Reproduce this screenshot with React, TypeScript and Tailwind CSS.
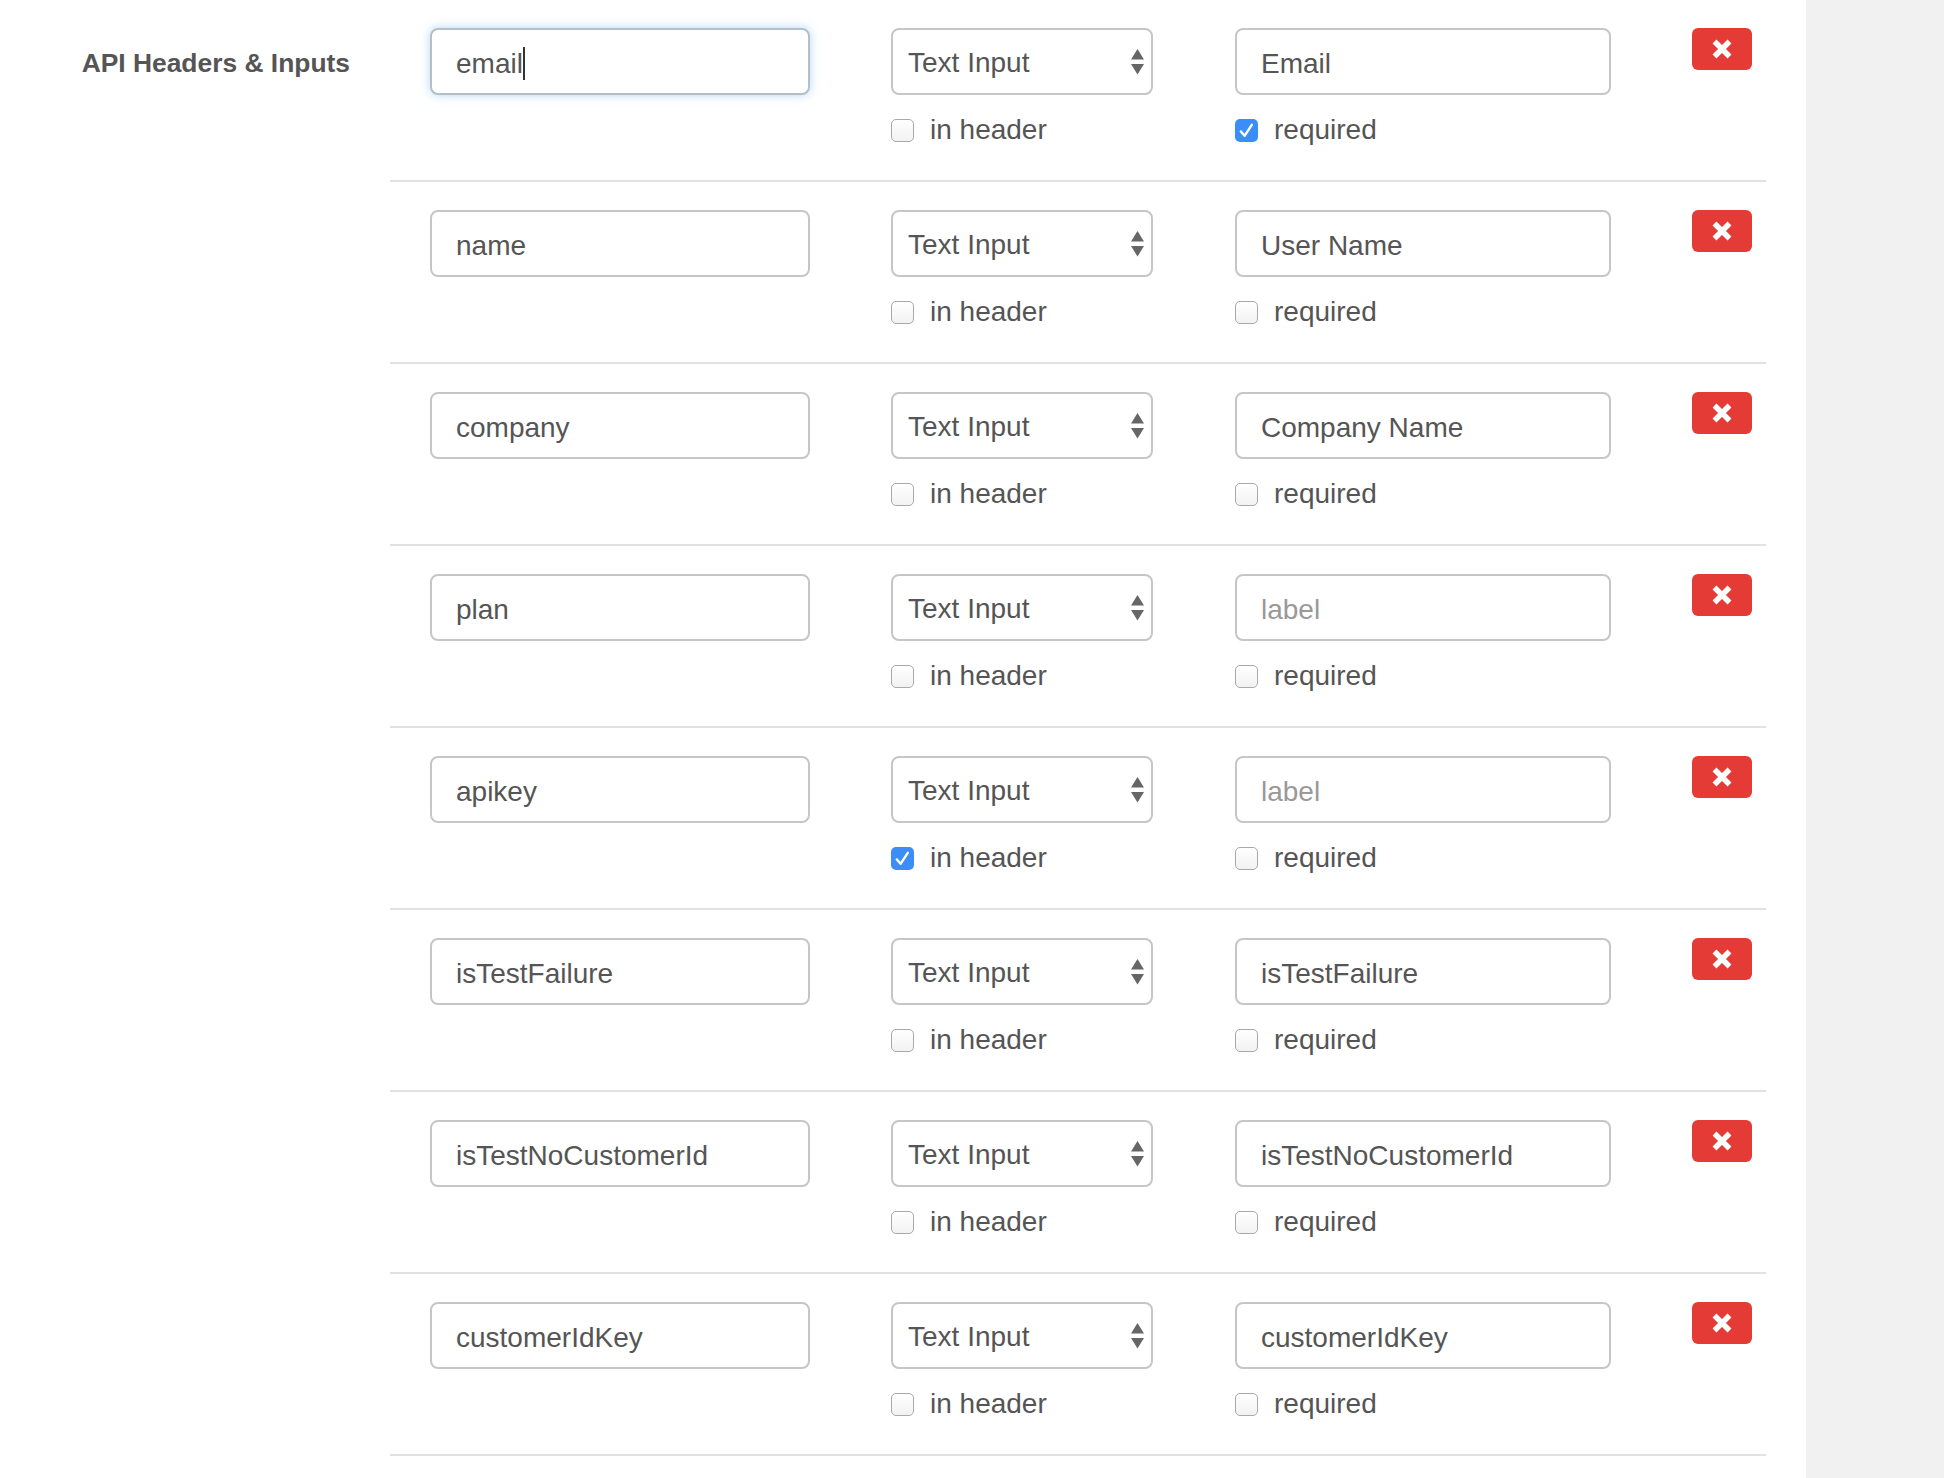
import React from "react";

type Field = {
  name: string;
  label: string;
  inHeader?: boolean;
  required?: boolean;
  focused?: boolean;
};

const fields: Field[] = [
  { name: "email", label: "Email", required: true, focused: true },
  { name: "name", label: "User Name" },
  { name: "company", label: "Company Name" },
  { name: "plan", label: "" },
  { name: "apikey", label: "", inHeader: true },
  { name: "isTestFailure", label: "isTestFailure" },
  { name: "isTestNoCustomerId", label: "isTestNoCustomerId" },
  { name: "customerIdKey", label: "customerIdKey" },
];

function Checkbox({ checked, text }: { checked?: boolean; text: string }) {
  return (
    <label className="mt-[15px] flex h-[40px] items-center gap-[16px] leading-[40px]">
      {checked ? (
        <span className="flex h-[23px] w-[23px] items-center justify-center rounded-[5px] bg-[#3b8ef6]">
          <svg width="23" height="23" viewBox="0 0 23 23" fill="none">
            <path d="M5.8 12.4 L9.6 16.8 L16.8 5.8" stroke="white" strokeWidth={2.4} strokeLinecap="round" strokeLinejoin="round" />
          </svg>
        </span>
      ) : (
        <span className="h-[23px] w-[23px] rounded-[5px] border-[1.5px] border-[#a9a9a9] bg-linear-to-b from-white to-[#f2f2f2]" />
      )}
      <span>{text}</span>
    </label>
  );
}

function TextField({ value, placeholder, focused, width }: { value: string; placeholder?: string; focused?: boolean; width: string }) {
  return (
    <div className={`relative ${width}`}>
      <input
        type="text"
        readOnly
        defaultValue={value}
        placeholder={placeholder}
        className={
          focused
            ? "box-border h-[67px] w-full rounded-[8px] border-2 border-[#b6bfc8] bg-white px-[24px] pt-[5px] pb-0 text-[28px] text-[#555] shadow-[0_0_10px_rgba(102,175,233,0.5)] outline-none"
            : "box-border h-[67px] w-full rounded-[8px] border-2 border-[#c6c6c6] bg-white px-[24px] pt-[5px] pb-0 text-[28px] text-[#555] outline-none placeholder:text-[#999]"
        }
      />
      {focused && <span className="absolute top-[19px] left-[93px] h-[33px] w-[2px] bg-[#333]" />}
    </div>
  );
}

function TypeSelect() {
  return (
    <div className="box-border flex h-[67px] w-[262px] items-center justify-between rounded-[8px] border-2 border-[#c6c6c6] bg-white pt-[3px] pr-[7px] pl-[15px]">
      <span>Text Input</span>
      <svg width="13" height="26" viewBox="0 0 13 26" className="-mt-[3px]">
        <path d="M6.5 0 L13 10.5 L0 10.5 Z" fill="#666" />
        <path d="M0 15 L13 15 L6.5 25.5 Z" fill="#666" />
      </svg>
    </div>
  );
}

function FieldRow({ field }: { field: Field }) {
  return (
    <div className="flex border-b-2 border-[#e1e1e1] pt-[28px] pb-[30px] pl-[40px]">
      <TextField value={field.name} focused={field.focused} width="w-[380px]" />
      <div className="ml-[81px] flex flex-col">
        <TypeSelect />
        <Checkbox checked={field.inHeader} text="in header" />
      </div>
      <div className="ml-[82px] flex flex-col">
        <TextField value={field.label} placeholder="label" width="w-[376px]" />
        <Checkbox checked={field.required} text="required" />
      </div>
      <div className="ml-[81px]">
        <button className="flex h-[42px] w-[60px] items-center justify-center rounded-[6px] bg-[#e53b36]">
          <svg width="20" height="20" viewBox="0 0 20 20">
            <path d="M2.5 2.5 L17.5 17.5 M17.5 2.5 L2.5 17.5" stroke="white" strokeWidth={5.5} />
          </svg>
        </button>
      </div>
    </div>
  );
}

export default function App() {
  return (
    <div className="flex min-h-screen bg-white font-['Liberation_Sans',Arial,sans-serif] text-[28px] text-[#555]">
      <div className="w-[390px] pt-[43px] pr-[40px] text-right text-[26.4px] leading-[40px] font-bold">
        API Headers &amp; Inputs
      </div>
      <div className="w-[1376px]">
        {fields.map((f) => (
          <FieldRow key={f.name} field={f} />
        ))}
      </div>
      <div className="ml-auto w-[138px] bg-[#f1f1f1]" />
    </div>
  );
}
